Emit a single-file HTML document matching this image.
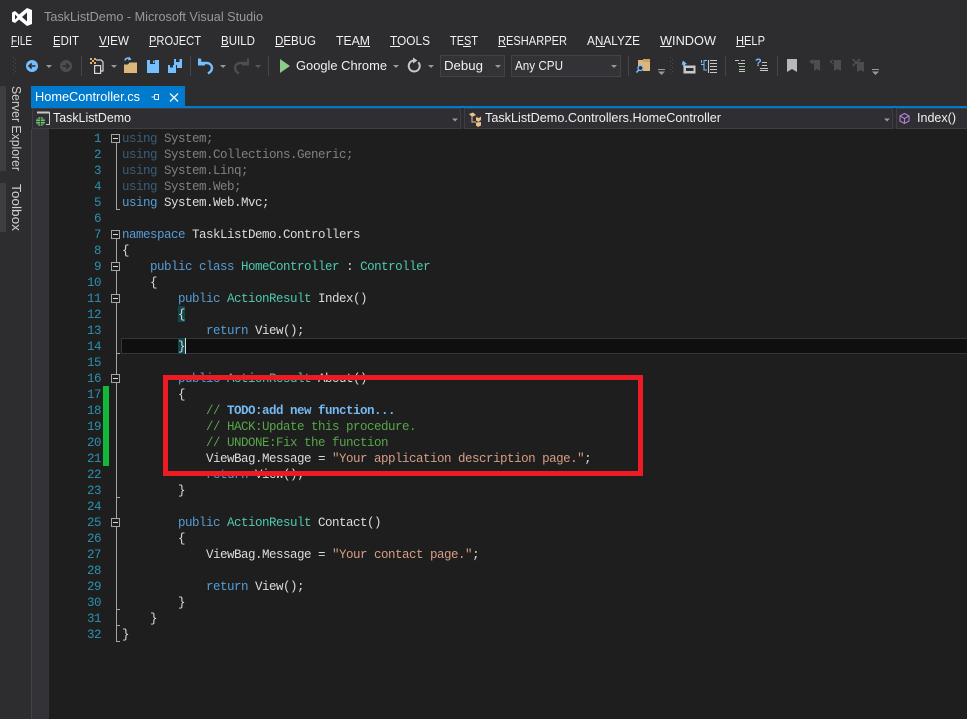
<!DOCTYPE html>
<html><head><meta charset="utf-8"><title>TaskListDemo - Microsoft Visual Studio</title>
<style>
html,body{margin:0;padding:0;background:#2d2d30;overflow:hidden}
svg{display:block}
.u{font-family:"Liberation Sans",sans-serif}
.m{font-family:"Liberation Sans",sans-serif;font-size:12.5px;fill:#f1f1f1}
.t{font-family:"Liberation Sans",sans-serif;font-size:13px;fill:#f1f1f1}
.c{font-family:"Liberation Mono",monospace;font-size:12.5px;letter-spacing:-.5px;fill:#dcdcdc;white-space:pre}
.n{font-family:"Liberation Mono",monospace;font-size:12.5px;letter-spacing:-.5px;fill:#2b91af;text-anchor:end}
.k{fill:#569cd6}.y{fill:#4ec9b0}.s{fill:#d69d85}.g{fill:#57a64a}
.fk{fill:#3d5c78}.f{fill:#808080}
.tri{fill:#999}
.dim{fill:#4d4d50}
.sep{fill:#46464a}
.fold{fill:none;stroke:#a5a5a5;stroke-width:1}
</style></head>
<body>
<svg width="967" height="719" viewBox="0 0 967 719" xmlns="http://www.w3.org/2000/svg">
<rect width="967" height="719" fill="#2d2d30"/>

<!-- logo and title -->
<path fill="#fff" fill-rule="evenodd" d="M27 8L32 10V24L27 26L19 19.5L15 23L12 21.5V12.5L15 11L19 14.5ZM27 12.5L22 17L27 21.5ZM15 14.5V19.5L17.5 17Z"/>
<text class="u" x="44" y="21" font-size="12.5" fill="#999" textLength="219" lengthAdjust="spacingAndGlyphs">TaskListDemo - Microsoft Visual Studio</text>

<!-- menu -->
<text class="m" x="11" y="45" textLength="21" lengthAdjust="spacingAndGlyphs">FILE</text>
<text class="m" x="53" y="45" textLength="26" lengthAdjust="spacingAndGlyphs">EDIT</text>
<text class="m" x="99" y="45" textLength="30" lengthAdjust="spacingAndGlyphs">VIEW</text>
<text class="m" x="149" y="45" textLength="52" lengthAdjust="spacingAndGlyphs">PROJECT</text>
<text class="m" x="221" y="45" textLength="34" lengthAdjust="spacingAndGlyphs">BUILD</text>
<text class="m" x="275" y="45" textLength="41" lengthAdjust="spacingAndGlyphs">DEBUG</text>
<text class="m" x="336" y="45" textLength="34" lengthAdjust="spacingAndGlyphs">TEAM</text>
<text class="m" x="390" y="45" textLength="40" lengthAdjust="spacingAndGlyphs">TOOLS</text>
<text class="m" x="450" y="45" textLength="28" lengthAdjust="spacingAndGlyphs">TEST</text>
<text class="m" x="498" y="45" textLength="69" lengthAdjust="spacingAndGlyphs">RESHARPER</text>
<text class="m" x="587" y="45" textLength="53" lengthAdjust="spacingAndGlyphs">ANALYZE</text>
<text class="m" x="660" y="45" textLength="56" lengthAdjust="spacingAndGlyphs">WINDOW</text>
<text class="m" x="736" y="45" textLength="29" lengthAdjust="spacingAndGlyphs">HELP</text>
<g fill="#f1f1f1">
<rect x="11" y="46" width="7" height="1"/><rect x="53" y="46" width="7" height="1"/><rect x="99" y="46" width="9" height="1"/>
<rect x="149" y="46" width="8" height="1"/><rect x="221" y="46" width="8" height="1"/><rect x="275" y="46" width="9" height="1"/>
<rect x="358" y="46" width="12" height="1"/><rect x="390" y="46" width="10" height="1"/><rect x="463" y="46" width="8" height="1"/>
<rect x="498" y="46" width="8" height="1"/><rect x="596" y="46" width="9" height="1"/><rect x="660" y="46" width="12" height="1"/><rect x="736" y="46" width="9" height="1"/>
</g>

<!-- toolbar grips -->
<g fill="#4a4a4e">
<rect x="13" y="57" width="1" height="1"/><rect x="15" y="59" width="1" height="1"/><rect x="13" y="61" width="1" height="1"/><rect x="15" y="63" width="1" height="1"/><rect x="13" y="65" width="1" height="1"/><rect x="15" y="67" width="1" height="1"/><rect x="13" y="69" width="1" height="1"/><rect x="15" y="71" width="1" height="1"/><rect x="13" y="73" width="1" height="1"/>
<rect x="670" y="57" width="1" height="1"/><rect x="672" y="59" width="1" height="1"/><rect x="670" y="61" width="1" height="1"/><rect x="672" y="63" width="1" height="1"/><rect x="670" y="65" width="1" height="1"/><rect x="672" y="67" width="1" height="1"/><rect x="670" y="69" width="1" height="1"/><rect x="672" y="71" width="1" height="1"/><rect x="670" y="73" width="1" height="1"/>
</g>
<!-- separators -->
<g class="sep">
<rect x="81" y="56" width="1" height="20"/><rect x="190" y="56" width="1" height="20"/><rect x="268" y="56" width="1" height="20"/>
<rect x="628" y="56" width="1" height="20"/><rect x="725" y="56" width="1" height="20"/><rect x="777" y="56" width="1" height="20"/>
</g>

<!-- back / forward -->
<circle cx="32" cy="66" r="6" fill="#75beff"/>
<path d="M35.500 66H29.500M31.800 63.400L29 66L31.800 68.600" fill="none" stroke="#2d2d30" stroke-width="1.600"/>
<path class="tri" d="M46 65H52L49 68Z"/>
<circle cx="66" cy="66" r="6" fill="#4d4d50"/>
<path d="M62.500 66H68.500M66.200 63.400L69 66L66.200 68.600" fill="none" stroke="#2d2d30" stroke-width="1.600"/>

<!-- new project -->
<path d="M90 58h2v2h2v-2h2v2h-2v2h2v2h-2v-2h-2v2h-2v-2h2v-2h-2z" fill="#e0b070"/>
<path d="M96 60h5l2 2v9h-7" fill="none" stroke="#d8d8d8" stroke-width="1.200"/>
<rect x="94.600" y="65.600" width="6" height="7.800" fill="#2d2d30" stroke="#d8d8d8" stroke-width="1.200"/>
<path class="tri" d="M111 65H117L114 68Z"/>

<!-- open -->
<path d="M124 64.500h4l1.500-2h7.500v10.500h-13z" fill="#dcb67a"/>
<path d="M125 60.500a3 3 0 0 1 5 -1.500" fill="none" stroke="#75beff" stroke-width="1.600"/>
<path d="M129 56.500l2.500 3-3.500 1z" fill="#75beff"/>

<!-- save, save all -->
<path d="M147 60h12v13h-12z" fill="#75beff"/><rect x="150" y="60" width="5" height="4" fill="#2d2d30"/><rect x="153" y="60.500" width="1.500" height="2.500" fill="#75beff"/>
<path d="M168 65h8v8h-8z" fill="#75beff"/><rect x="170" y="65" width="3" height="2.500" fill="#2d2d30"/>
<path d="M174 59h8v9h-5v-3h-3z" fill="#75beff"/><rect x="176" y="59" width="3.500" height="3" fill="#2d2d30"/>

<!-- undo / redo -->
<path d="M199 60h1v3h6.500c3.500 0 5.500 2.500 5.500 5 0 2.500-1.500 4-4 5.500" fill="none" stroke="#75beff" stroke-width="2.400"/>
<path d="M199 58.500v6h6" fill="none" stroke="#75beff" stroke-width="2"/>
<path class="tri" d="M220 65H226L223 68Z"/>
<path d="M248 63h-7.500c-3.500 0-5.500 2.500-5.500 5 0 2.500 1.500 4 4 5.500" fill="none" stroke="#4d4d50" stroke-width="2.400"/>
<path d="M248 58.500v6h-6" fill="none" stroke="#4d4d50" stroke-width="2"/>
<path class="tri" d="M255 65H261L258 68Z" style="fill:#5a5a5e"/>

<!-- run -->
<path d="M280 59L290 66L280 73Z" fill="#8cc98c"/>
<text class="t" x="296" y="70" textLength="91" lengthAdjust="spacingAndGlyphs">Google Chrome</text>
<path class="tri" d="M393 65H399L396 68Z"/>
<path d="M418.300 62.300a5.500 5.500 0 1 1-4.300-1.800" fill="none" stroke="#c8c8c8" stroke-width="2"/>
<path d="M413 57.500l4.500 3-4.500 3z" fill="#c8c8c8"/>
<path class="tri" d="M428 65H434L431 68Z"/>

<!-- combos -->
<rect x="440.500" y="55.500" width="64" height="21" fill="#333337" stroke="#434346"/>
<text class="t" x="444" y="70" textLength="39" lengthAdjust="spacingAndGlyphs">Debug</text>
<path class="tri" d="M495 65H501L498 68Z"/>
<rect x="511.500" y="55.500" width="109" height="21" fill="#333337" stroke="#434346"/>
<text class="t" x="515" y="70" textLength="48" lengthAdjust="spacingAndGlyphs">Any CPU</text>
<path class="tri" d="M611 65H617L614 68Z"/>

<!-- find in files -->
<path d="M638 60h12v11h-7l-1-5h-4z" fill="#dcb67a"/><path d="M643 59h7v3h-7z" fill="#c9a268"/>
<circle cx="640.500" cy="68" r="2.500" fill="#2d2d30" stroke="#75beff" stroke-width="1.300"/><path d="M638.700 70L636.500 72.500" stroke="#75beff" stroke-width="1.600"/>
<rect x="658" y="69" width="7" height="1" fill="#999"/><path class="tri" d="M658 71.500H665L661.500 75Z"/>

<!-- indent icons -->
<path d="M683 60.500L687 64L685 64.500L685.500 68H683.500L683 64.500L681.500 65Z" fill="#75beff"/>
<path d="M683.500 65.500V73.500H695.500V65.500H687" fill="#c8c8c8"/><rect x="686" y="68" width="7.500" height="3" fill="#2d2d30"/>
<path d="M707 60.500H704V70H707M704 64.500H701" fill="none" stroke="#75beff" stroke-width="1"/><path d="M701.500 60v3" stroke="#75beff"/>
<path d="M708.500 60V73M710 60.500H717M710 63.500H717M710 66.500H717M710 69.500H717M710 72.500H717" fill="none" stroke="#c8c8c8" stroke-width="1.100"/>
<path d="M735 60.500H739M738 63.500H745M741 66.500H745M739 69.500H745M739 71.500H745" fill="none" stroke="#c8c8c8"/><path d="M741 60.500H745M739 66.500H745" stroke="#8cc98c" fill="none"/>
<text class="u" x="755" y="66" font-size="11" font-weight="bold" fill="#75beff">?</text>
<path d="M762 62.500H767M762 65.500H767M760 68.500H768M760 70.500H768" fill="none" stroke="#c8c8c8"/>

<!-- bookmarks -->
<path d="M787 59H797V72L792 69L787 72Z" fill="#b8b8b8"/>
<path d="M814 60H820V71L817 69L814 71Z" fill="#4d4d50"/><path d="M809 61.500L813 59V64.500ZM811 60.500H816V63H811Z" fill="#4d4d50"/>
<path d="M834 60H841V71L837.500 69L834 71Z" fill="#4d4d50"/><path d="M836 61.500L832 59V64.500ZM830 60.500H834V63H830Z" fill="#4d4d50"/>
<path d="M857 62H864V72L860.500 70L857 72Z" fill="#4d4d50"/><path d="M852.500 59L860 66M860 59L852.500 66" stroke="#4d4d50" stroke-width="1.800"/>
<rect x="872" y="69" width="7" height="1" fill="#999"/><path class="tri" d="M872 71.500H879L875.500 75Z"/>

<!-- left rail -->
<rect x="0" y="86" width="6" height="85" fill="#3e3e42"/>
<rect x="0" y="183" width="6" height="49" fill="#3e3e42"/>
<text class="u" transform="translate(12 86) rotate(90)" font-size="13" fill="#d0d0d0" textLength="85" lengthAdjust="spacingAndGlyphs">Server Explorer</text>
<text class="u" transform="translate(12 184) rotate(90)" font-size="13" fill="#d0d0d0" textLength="47" lengthAdjust="spacingAndGlyphs">Toolbox</text>

<!-- tab -->
<rect x="31" y="86" width="154" height="21" fill="#007acc"/>
<rect x="31" y="106" width="936" height="2" fill="#007acc"/>
<text class="t" x="35" y="101" style="fill:#fff" textLength="105" lengthAdjust="spacingAndGlyphs">HomeController.cs</text>
<path d="M151.500 97H154M154.500 94.500V99.500M154.500 94.500H158.500V99.500H154.500" fill="none" stroke="#e8f2fa"/>
<path d="M170 93.500L178 101.500M178 93.500L170 101.500" stroke="#e8f2fa" stroke-width="1.400"/>

<!-- nav bar -->
<rect x="31" y="108" width="936" height="21" fill="#2d2d30"/>
<rect x="32.500" y="108.500" width="428" height="20" fill="#2f2f33" stroke="#3f3f43"/>
<rect x="464.500" y="108.500" width="428" height="20" fill="#2f2f33" stroke="#3f3f43"/>
<rect x="896.500" y="108.500" width="72" height="20" fill="#2f2f33" stroke="#3f3f43"/>
<path d="M37 112.500H49.500V124.500H46" fill="none" stroke="#c8c8c8"/><path d="M37 112.500H49.500" stroke="#c8c8c8" stroke-width="2"/>
<circle cx="40.500" cy="121.500" r="4.500" fill="#6fc06f"/>
<path d="M36 121.500H45M40.500 117V126M37 119H44M37 124H44" stroke="#2d2d30" stroke-width=".7" fill="none"/>
<text class="t" x="53" y="122" textLength="78" lengthAdjust="spacingAndGlyphs">TaskListDemo</text>
<path class="tri" d="M452 118.500H458L455 121.500Z"/>
<path d="M469 114L473 112.500L476 115L472 117ZM476 117L479 118L481 116.500V120L478.500 122L476 120.500ZM476 122.500L481 122V125.500L478 127L476 125.500Z" fill="#e8c28a"/>
<path d="M472 117V122H476" fill="none" stroke="#e8c28a"/>
<text class="t" x="485" y="122" textLength="236" lengthAdjust="spacingAndGlyphs">TaskListDemo.Controllers.HomeController</text>
<path class="tri" d="M884 118.500H890L887 121.500Z"/>
<path d="M904.500 113.500L909 116V121L904.500 123.500L900 121V116ZM900 116L904.500 118.500L909 116M904.500 118.500V123.500" fill="none" stroke="#b180d7" stroke-width="1.100"/>
<text class="t" x="917" y="122" textLength="39" lengthAdjust="spacingAndGlyphs">Index()</text>

<!-- editor -->
<rect x="31" y="129" width="1" height="590" fill="#434346"/>
<rect x="32" y="129" width="17" height="590" fill="#333337"/>
<rect x="49" y="129" width="918" height="590" fill="#1e1e1e"/>

<!-- current line -->
<rect x="121.500" y="338.500" width="846" height="15" fill="#0f0f0f" stroke="#363636"/>
<rect x="178" y="306" width="7" height="16" fill="#11464c"/>
<rect x="178" y="338" width="7" height="16" fill="#11464c"/>
<rect x="185" y="338" width="1" height="16" fill="#dcdcdc"/>

<!-- change bar -->
<rect x="103" y="386" width="6" height="80" fill="#12b83a"/>

<!-- folding -->
<g class="fold">
<path d="M116.500 143V209.500H120"/>
<path d="M116.500 239V641.500H120"/>
<path d="M116.500 353.500H120M116.500 497.500H120M116.500 609.500H120M116.500 625.500H120"/>
</g>
<g>
<g fill="#1e1e1e" stroke="#a5a5a5">
<rect x="111.500" y="134.500" width="8" height="8"/><rect x="111.500" y="230.500" width="8" height="8"/><rect x="111.500" y="262.500" width="8" height="8"/>
<rect x="111.500" y="294.500" width="8" height="8"/><rect x="111.500" y="374.500" width="8" height="8"/><rect x="111.500" y="518.500" width="8" height="8"/>
</g>
<g fill="#dcdcdc">
<rect x="113" y="138" width="5" height="1"/><rect x="113" y="234" width="5" height="1"/><rect x="113" y="266" width="5" height="1"/>
<rect x="113" y="298" width="5" height="1"/><rect x="113" y="378" width="5" height="1"/><rect x="113" y="522" width="5" height="1"/>
</g>
</g>

<!-- line numbers -->
<text class="n" x="101" y="142">1</text><text class="n" x="101" y="158">2</text><text class="n" x="101" y="174">3</text><text class="n" x="101" y="190">4</text>
<text class="n" x="101" y="206">5</text><text class="n" x="101" y="222">6</text><text class="n" x="101" y="238">7</text><text class="n" x="101" y="254">8</text>
<text class="n" x="101" y="270">9</text><text class="n" x="101" y="286">10</text><text class="n" x="101" y="302">11</text><text class="n" x="101" y="318">12</text>
<text class="n" x="101" y="334">13</text><text class="n" x="101" y="350">14</text><text class="n" x="101" y="366">15</text><text class="n" x="101" y="382">16</text>
<text class="n" x="101" y="398">17</text><text class="n" x="101" y="414">18</text><text class="n" x="101" y="430">19</text><text class="n" x="101" y="446">20</text>
<text class="n" x="101" y="462">21</text><text class="n" x="101" y="478">22</text><text class="n" x="101" y="494">23</text><text class="n" x="101" y="510">24</text>
<text class="n" x="101" y="526">25</text><text class="n" x="101" y="542">26</text><text class="n" x="101" y="558">27</text><text class="n" x="101" y="574">28</text>
<text class="n" x="101" y="590">29</text><text class="n" x="101" y="606">30</text><text class="n" x="101" y="622">31</text><text class="n" x="101" y="638">32</text>

<!-- code -->
<text class="c" x="122" y="142"><tspan class="fk">using</tspan><tspan class="f"> System;</tspan></text>
<text class="c" x="122" y="158"><tspan class="fk">using</tspan><tspan class="f"> System.Collections.Generic;</tspan></text>
<text class="c" x="122" y="174"><tspan class="fk">using</tspan><tspan class="f"> System.Linq;</tspan></text>
<text class="c" x="122" y="190"><tspan class="fk">using</tspan><tspan class="f"> System.Web;</tspan></text>
<text class="c" x="122" y="206"><tspan class="k">using</tspan> System.Web.Mvc;</text>
<text class="c" x="122" y="238"><tspan class="k">namespace</tspan> TaskListDemo.Controllers</text>
<text class="c" x="122" y="254">{</text>
<text class="c" x="150" y="270"><tspan class="k">public class</tspan> <tspan class="y">HomeController</tspan> : <tspan class="y">Controller</tspan></text>
<text class="c" x="150" y="286">{</text>
<text class="c" x="178" y="302"><tspan class="k">public</tspan> <tspan class="y">ActionResult</tspan> Index()</text>
<text class="c" x="178" y="318">{</text>
<text class="c" x="206" y="334"><tspan class="k">return</tspan> View();</text>
<text class="c" x="178" y="350">}</text>
<text class="c" x="178" y="382"><tspan class="k">public</tspan> <tspan class="y">ActionResult</tspan> About()</text>
<text class="c" x="178" y="398">{</text>
<text class="c" x="206" y="414"><tspan class="g">// </tspan><tspan style="fill:#74b9f2;font-weight:bold">TODO:add new function...</tspan></text>
<text class="c" x="206" y="430"><tspan class="g">// HACK:Update this procedure.</tspan></text>
<text class="c" x="206" y="446"><tspan class="g">// UNDONE:Fix the function</tspan></text>
<text class="c" x="206" y="462">ViewBag.Message = <tspan class="s">"Your application description page."</tspan>;</text>
<text class="c" x="206" y="478"><tspan class="k">return</tspan> View();</text>
<text class="c" x="178" y="494">}</text>
<text class="c" x="178" y="526"><tspan class="k">public</tspan> <tspan class="y">ActionResult</tspan> Contact()</text>
<text class="c" x="178" y="542">{</text>
<text class="c" x="206" y="558">ViewBag.Message = <tspan class="s">"Your contact page."</tspan>;</text>
<text class="c" x="206" y="590"><tspan class="k">return</tspan> View();</text>
<text class="c" x="178" y="606">}</text>
<text class="c" x="150" y="622">}</text>
<text class="c" x="122" y="638">}</text>

<!-- red annotation -->
<rect x="165.500" y="377.500" width="475" height="96" fill="none" stroke="#ed1c24" stroke-width="5"/>
</svg>
</body></html>
